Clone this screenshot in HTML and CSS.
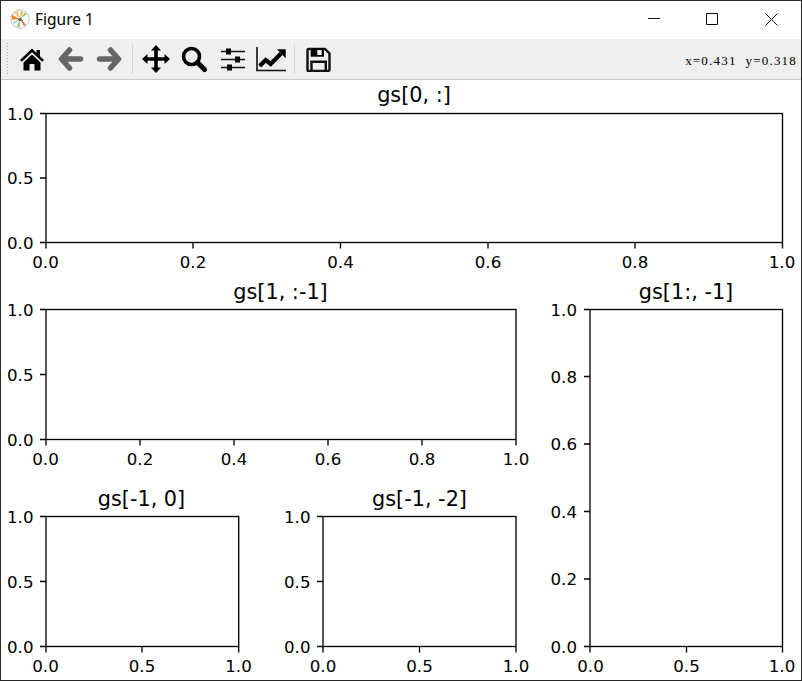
FILE: index.html
```html
<!DOCTYPE html>
<html lang="en">
<head>
<meta charset="utf-8">
<title>Figure 1</title>
<link rel="stylesheet" href="styles.css">
</head>
<body>
<div class="window">
  <header class="titlebar">
    <svg class="app-icon" width="20" height="20" viewBox="0 0 20 20">
      <circle cx="10" cy="10" r="9.300" fill="#fbfbfb" stroke="#c4c4c4" stroke-width="1"/>
      <path d="M10 10.500 L2 5.500 L1.800 10.500Z" fill="#f08a24"/>
      <path d="M10 10 L7.500 1.500 L3.500 3.500Z" fill="#f0c890"/>
      <path d="M10 10 L11 2 L13.500 3Z" fill="#f2b63c"/>
      <path d="M10 10 L16.500 5 L15 3.500Z" fill="#7fc45c"/>
      <path d="M10 10 L13 11 L13 13Z" fill="#e2702e"/>
      <path d="M10 10 L16 15.500 L14 17Z" fill="#d9743a"/>
      <path d="M10 10 L7 17.500 L9.500 18Z" fill="#8fbf6a"/>
      <path d="M10 10 L3 13 L4 15Z" fill="#a9c8e0"/>
      <circle cx="10" cy="10.500" r="1.700" fill="#55636b"/>
    </svg>
    <span class="title">Figure 1</span>
    <div class="controls">
      <svg class="control" width="46" height="38" viewBox="0 0 46 38"><path d="M12 17.500H24" class="glyph"/></svg>
      <svg class="control" width="60" height="38" viewBox="0 0 60 38"><path d="M24.500 12.500H35.500V23.500H24.500Z" class="glyph"/></svg>
      <svg class="control" width="58" height="38" viewBox="0 0 58 38"><path d="M23.500 12.500L35.500 24.500M35.500 12.500L23.500 24.500" class="glyph"/></svg>
    </div>
  </header>

  <div class="toolbar">
    <span class="grip"></span>
    <button class="tool" aria-label="Home">
      <svg width="26" height="26" viewBox="0 0 26 26"><path d="M13 2.500L1 14l1.800 1.800L13 6.200l10.200 9.600L25 14l-4-3.800V4h-3.500v2.900Z M4.500 16.500V24.500h6v-6.500h5v6.500h6v-8L13 8.500Z" class="fill-black"/></svg>
    </button>
    <button class="tool" aria-label="Back">
      <svg width="26" height="26" viewBox="0 0 26 26"><path d="M11.500 4L3.500 13l8 9M4 13H22.500" class="arrow"/></svg>
    </button>
    <button class="tool" aria-label="Forward">
      <svg width="26" height="26" viewBox="0 0 26 26"><path d="M14.500 4L22.500 13l-8 9M22 13H3.500" class="arrow"/></svg>
    </button>
    <span class="sep"></span>
    <button class="tool" aria-label="Pan">
      <svg width="30" height="30" viewBox="0 0 30 30"><path d="M15 1l5 5.500h-3.200V13.200H23.500V10l5.500 5-5.500 5v-3.200H16.800V23.500H20L15 29l-5-5.500h3.200V16.800H6.500V20L1 15l5.500-5v3.200H13.200V6.500H10Z" class="fill-black"/></svg>
    </button>
    <button class="tool" aria-label="Zoom">
      <svg width="28" height="28" viewBox="0 0 28 28"><circle cx="11.500" cy="11.500" r="8" class="lens"/><path d="M17.500 17.500L24.500 24.500" class="handle"/></svg>
    </button>
    <button class="tool" aria-label="Configure">
      <svg width="26" height="26" viewBox="0 0 26 26">
        <path d="M1 5.500H25M1 13.500H25M1 21.500H25" class="rule"/>
        <rect x="6" y="2.500" width="5" height="6" class="fill-black"/>
        <rect x="15" y="10.500" width="5" height="6" class="fill-black"/>
        <rect x="7" y="18.500" width="5" height="6" class="fill-black"/>
      </svg>
    </button>
    <button class="tool" aria-label="Edit">
      <svg width="30" height="28" viewBox="0 0 30 28">
        <path d="M1 2V25.500H30" class="rule"/>
        <path d="M3.700 21L9.700 15L14.700 19L25 8.500" class="trend"/>
        <path d="M21 4.300H29.700V13.300Z" class="fill-black"/>
      </svg>
    </button>
    <span class="sep sep-last"></span>
    <button class="tool" aria-label="Save">
      <svg width="26" height="26" viewBox="0 0 26 26">
        <path d="M3.500 3H20L24.500 7.500V23.500Q24.500 25 23 25H3.500Q2.500 25 2.500 24V4Q2.500 3 3.500 3Z" class="disk"/>
        <path d="M5.700 2.500H19V10.700H5.700Z" class="fill-black"/>
        <path d="M6.500 25V15.700H20.800V25" class="disk"/>
        <rect x="12.300" y="4" width="4.400" height="5" class="fill-panel"/>
      </svg>
    </button>
    <span class="coords">x=0.431&nbsp;&nbsp;y=0.318</span>
  </div>

  <svg class="figure" width="800" height="600" viewBox="1 80 800 600">
    <!-- gs[0, :] -->
    <text class="ax-title" x="414" y="102">gs[0, :]</text>
    <rect class="spine" x="46" y="113.500" width="736.500" height="129"/>
    <path class="tick" d="M40 113.500H46M40 178H46M40 242.500H46M46 242.500V248.500M193 242.500V248.500M340.500 242.500V248.500M488 242.500V248.500M635 242.500V248.500M782.500 242.500V248.500"/>
    <text class="ylab" x="33.500" y="119.500">1.0</text><text class="ylab" x="33.500" y="184">0.5</text><text class="ylab" x="33.500" y="248.500">0.0</text>
    <text class="xlab" x="45.500" y="268">0.0</text><text class="xlab" x="193" y="268">0.2</text><text class="xlab" x="340.500" y="268">0.4</text><text class="xlab" x="488" y="268">0.6</text><text class="xlab" x="635" y="268">0.8</text><text class="xlab" x="782" y="268">1.0</text>

    <!-- gs[1, :-1] -->
    <text class="ax-title" x="280.500" y="299">gs[1, :-1]</text>
    <rect class="spine" x="46" y="309.500" width="470" height="130"/>
    <path class="tick" d="M40 309.500H46M40 374.500H46M40 439.500H46M46 439.500V445.500M140 439.500V445.500M234 439.500V445.500M328 439.500V445.500M422 439.500V445.500M516 439.500V445.500"/>
    <text class="ylab" x="33.500" y="315.500">1.0</text><text class="ylab" x="33.500" y="380.500">0.5</text><text class="ylab" x="33.500" y="445.500">0.0</text>
    <text class="xlab" x="45.500" y="465">0.0</text><text class="xlab" x="140" y="465">0.2</text><text class="xlab" x="234" y="465">0.4</text><text class="xlab" x="328" y="465">0.6</text><text class="xlab" x="422" y="465">0.8</text><text class="xlab" x="516" y="465">1.0</text>

    <!-- gs[1:, -1] -->
    <text class="ax-title" x="686" y="299">gs[1:, -1]</text>
    <rect class="spine" x="590" y="309.500" width="192.500" height="337"/>
    <path class="tick" d="M584 309.500H590M584 376.500H590M584 444H590M584 511.500H590M584 579H590M584 646.500H590M590 646.500V652.500M686.500 646.500V652.500M782.500 646.500V652.500"/>
    <text class="ylab" x="577" y="315.500">1.0</text><text class="ylab" x="577" y="382.500">0.8</text><text class="ylab" x="577" y="450">0.6</text><text class="ylab" x="577" y="517.500">0.4</text><text class="ylab" x="577" y="585">0.2</text><text class="ylab" x="577" y="652.500">0.0</text>
    <text class="xlab" x="590.500" y="672">0.0</text><text class="xlab" x="686.500" y="672">0.5</text><text class="xlab" x="782" y="672">1.0</text>

    <!-- gs[-1, 0] -->
    <text class="ax-title" x="141.500" y="506">gs[-1, 0]</text>
    <rect class="spine" x="46" y="516.500" width="192.700" height="130"/>
    <path class="tick" d="M40 516.500H46M40 581.500H46M40 646.500H46M46 646.500V652.500M142 646.500V652.500M238.700 646.500V652.500"/>
    <text class="ylab" x="33.500" y="522.500">1.0</text><text class="ylab" x="33.500" y="587.500">0.5</text><text class="ylab" x="33.500" y="652.500">0.0</text>
    <text class="xlab" x="45.500" y="672">0.0</text><text class="xlab" x="142" y="672">0.5</text><text class="xlab" x="238.500" y="672">1.0</text>

    <!-- gs[-1, -2] -->
    <text class="ax-title" x="419.500" y="506">gs[-1, -2]</text>
    <rect class="spine" x="323" y="516.500" width="193" height="130"/>
    <path class="tick" d="M317 516.500H323M317 581.500H323M317 646.500H323M323 646.500V652.500M419.500 646.500V652.500M516 646.500V652.500"/>
    <text class="ylab" x="310.500" y="522.500">1.0</text><text class="ylab" x="310.500" y="587.500">0.5</text><text class="ylab" x="310.500" y="652.500">0.0</text>
    <text class="xlab" x="323" y="672">0.0</text><text class="xlab" x="419.500" y="672">0.5</text><text class="xlab" x="516" y="672">1.0</text>
  </svg>
</div>
</body>
</html>
```

FILE: styles.css
```css
* { box-sizing: border-box; }
html, body { margin: 0; padding: 0; background: #fff; }
body { width: 802px; height: 682px; overflow: hidden; }

.window {
  width: 802px;
  height: 681px;
  border: 1px solid #2a2a2a;
  background: #fff;
  display: flex;
  flex-direction: column;
}

.titlebar {
  height: 38px;
  padding-bottom: 2px;
  display: flex;
  align-items: center;
  background: #fff;
  flex: none;
}
.app-icon { margin-left: 9px; flex: none; }
.title {
  margin-left: 5px;
  font: 15.500px "Noto Sans", "Open Sans", sans-serif;
  color: #000;
}
.controls { margin-left: auto; margin-right: 1px; display: flex; align-self: flex-start; }
.control { display: block; }
.glyph { fill: none; stroke: #111; stroke-width: 1; }

.toolbar {
  height: 41px;
  flex: none;
  display: flex;
  align-items: center;
  background: #efefef;
  border-bottom: 1px solid #c6c6c6;
  padding-left: 5px;
}
.grip {
  width: 3px;
  height: 34px;
  margin-right: 3.750px;
  background-image: radial-gradient(circle, #a8a8a8 0.8px, transparent 1px);
  background-size: 3px 3px;
  flex: none;
}
.tool {
  width: 38.500px;
  height: 38px;
  padding: 0;
  border: 0;
  background: none;
  display: flex;
  align-items: center;
  justify-content: center;
  flex: none;
}
.sep { width: 1px; height: 30px; background: #d4d4d4; margin: 0 3px 0 4px; flex: none; }
.sep-last { margin-right: 3.500px; }

.fill-black { fill: #000; }
.fill-panel { fill: #efefef; }
.arrow { fill: none; stroke: #666; stroke-width: 5.500; stroke-linecap: round; stroke-linejoin: round; }
.lens { fill: none; stroke: #000; stroke-width: 3.600; }
.handle { fill: none; stroke: #000; stroke-width: 5; stroke-linecap: round; }
.rule { fill: none; stroke: #111; stroke-width: 1.600; }
.trend { fill: none; stroke: #000; stroke-width: 4.200; }
.disk { fill: none; stroke: #111; stroke-width: 2.400; }

.coords {
  margin-left: auto;
  margin-right: 4px;
  margin-top: 4px;
  font: 13px "Liberation Serif", "DejaVu Serif", serif;
  letter-spacing: 1.200px;
  color: #000;
  white-space: nowrap;
}

.figure { display: block; flex: none; background: #fff; }
.spine { fill: none; stroke: #000; stroke-width: 1.330; }
.tick { fill: none; stroke: #000; stroke-width: 1.330; }
.ax-title { font: 20.800px "DejaVu Sans", sans-serif; text-anchor: middle; fill: #000; }
.ylab { font: 16.670px "DejaVu Sans", sans-serif; text-anchor: end; fill: #000; }
.xlab { font: 16.670px "DejaVu Sans", sans-serif; text-anchor: middle; fill: #000; }
```
